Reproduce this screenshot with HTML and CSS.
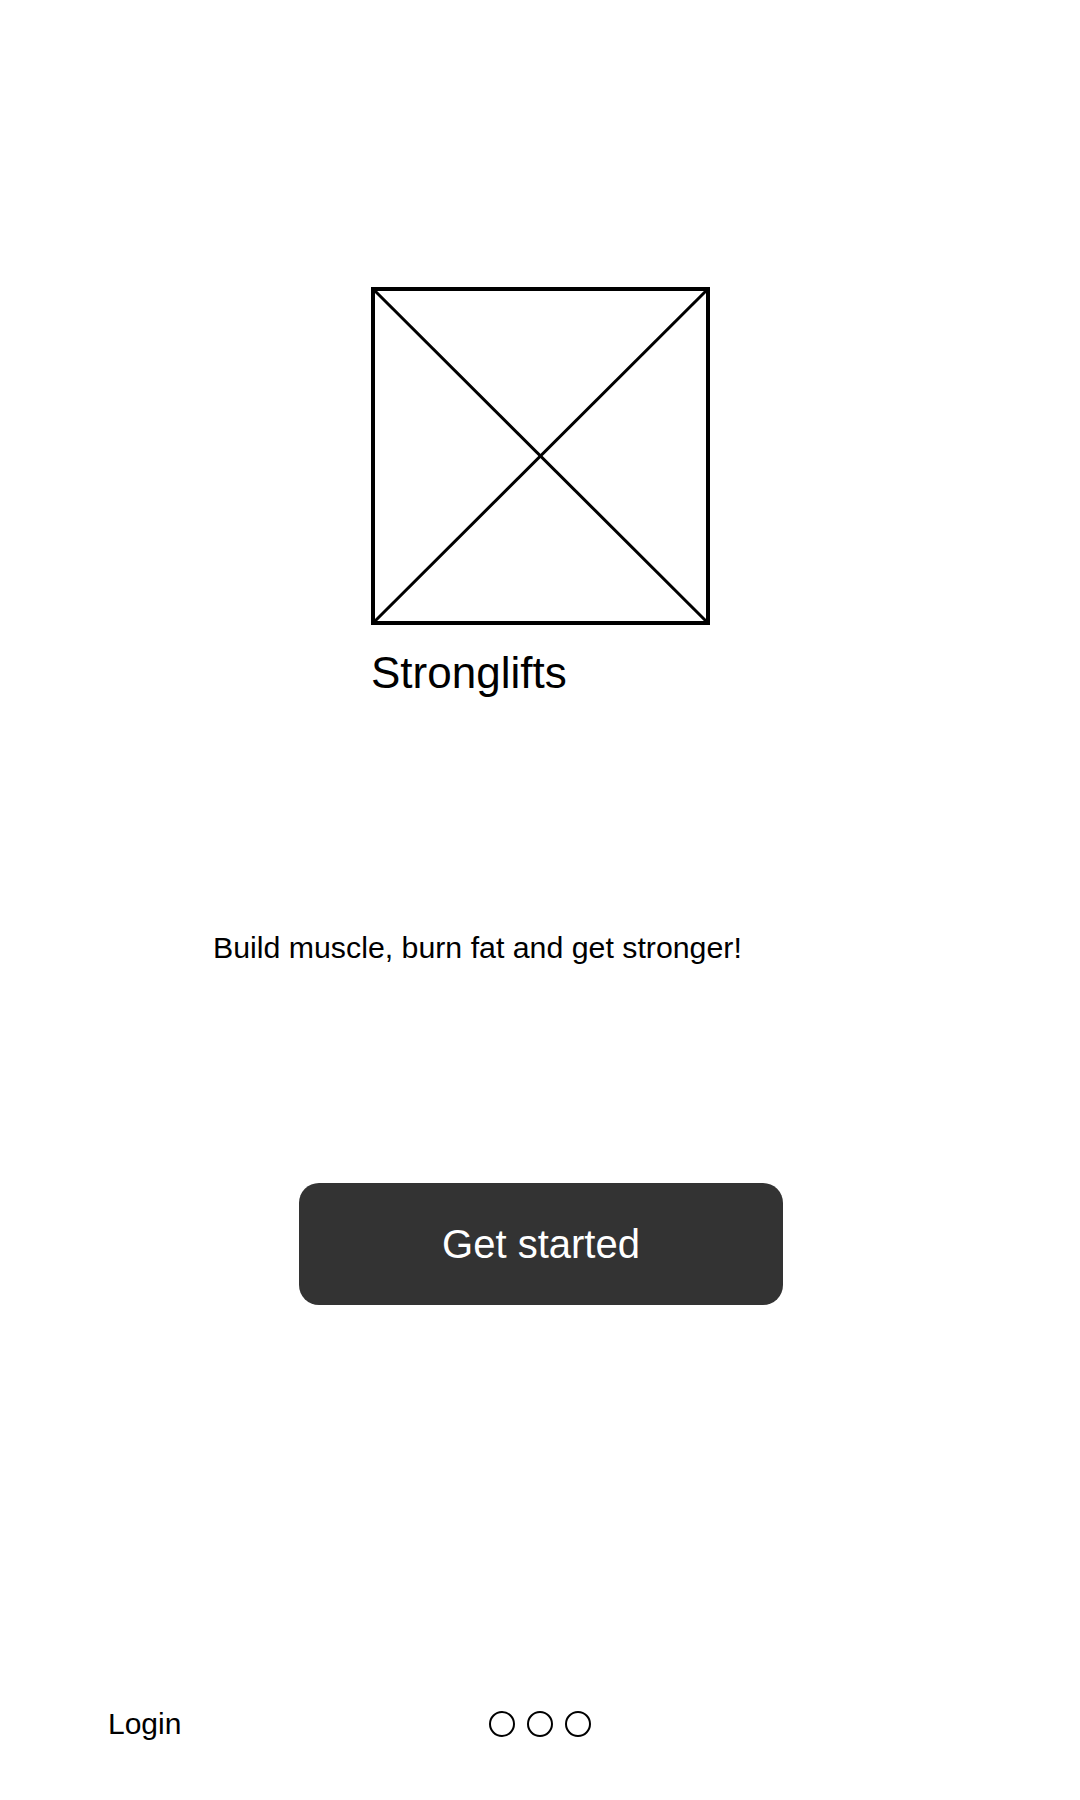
FILE: index.html
```html
<!DOCTYPE html>
<html lang="en">
<head>
<meta charset="utf-8">
<title>Stronglifts</title>
<link rel="stylesheet" href="styles.css">
</head>
<body>
<main class="screen">
  <section class="brand">
    <div class="placeholder">
      <svg class="cross" viewBox="0 0 100 100" preserveAspectRatio="none" aria-hidden="true">
        <line x1="0" y1="0" x2="100" y2="100" vector-effect="non-scaling-stroke"/>
        <line x1="100" y1="0" x2="0" y2="100" vector-effect="non-scaling-stroke"/>
      </svg>
    </div>
    <h1 class="title">Stronglifts</h1>
  </section>
  <p class="tagline">Build muscle, burn fat and get stronger!</p>
  <div class="cta-row">
    <button class="cta" type="button">Get started</button>
  </div>
  <footer class="footer">
    <a class="login" href="#">Login</a>
    <div class="dots">
      <span class="dot"></span>
      <span class="dot"></span>
      <span class="dot"></span>
    </div>
    <span class="spacer"></span>
  </footer>
</main>
</body>
</html>
```

FILE: styles.css
```css
html, body {
  margin: 0;
  padding: 0;
  background: #ffffff;
}

body {
  font-family: "Liberation Sans", Arial, sans-serif;
  color: #000000;
}

.screen {
  width: 1080px;
  height: 1800px;
  display: flex;
  flex-direction: column;
  box-sizing: border-box;
  padding-top: 287px;
}

.brand {
  width: 339px;
  margin-left: 371px;
}

.placeholder {
  width: 339px;
  height: 338px;
  box-sizing: border-box;
  border: 4px solid #000000;
  position: relative;
}

.cross {
  position: absolute;
  inset: 0;
  width: 100%;
  height: 100%;
}

.cross line {
  stroke: #000000;
  stroke-width: 3px;
}

.title {
  margin: 26px 0 0 0;
  font-size: 44px;
  line-height: 1;
  font-weight: normal;
  white-space: nowrap;
}

.tagline {
  margin: 238px 0 0 213px;
  font-size: 30.3px;
  line-height: 1;
}

.cta-row {
  margin-top: 220px;
  display: flex;
  padding-left: 299px;
}

.cta {
  width: 484px;
  height: 122px;
  border: none;
  border-radius: 20px;
  background: #333333;
  color: #ffffff;
  font-family: "Liberation Sans", Arial, sans-serif;
  font-size: 40px;
  padding: 0;
  display: flex;
  align-items: center;
  justify-content: center;
}

.footer {
  margin-top: 402px;
  display: grid;
  grid-template-columns: 1fr auto 1fr;
  align-items: center;
  padding: 0 108px;
  height: 34px;
}

.login {
  font-size: 30px;
  line-height: 1;
  color: #000000;
  text-decoration: none;
  justify-self: start;
}

.dots {
  display: flex;
  gap: 12px;
  padding-top: 0;
}

.dot {
  width: 26px;
  height: 26px;
  box-sizing: border-box;
  border: 2.8px solid #000000;
  border-radius: 50%;
}
```
